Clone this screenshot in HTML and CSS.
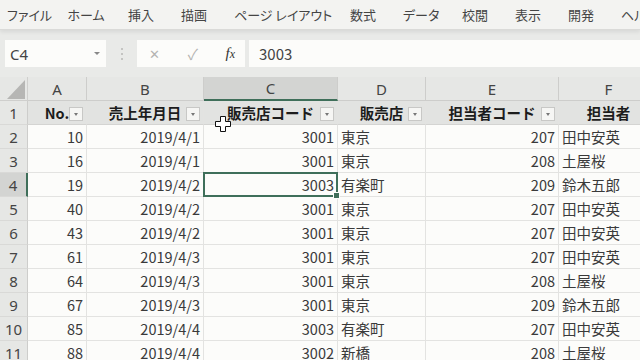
FILE: index.html
```html
<!DOCTYPE html>
<html lang="ja">
<head>
  <meta charset="UTF-8" /><meta name="viewport" content="width=device-width,initial-scale=1" />
  <title>売上データ - Excel</title>
  <link rel="stylesheet" href="styles.css">
</head>
<body>

  <!-- Ribbon tabs -->
  <div class="ribbon">
    <span class="tab wide">ファイル</span><span class="tab wide">ホーム</span><span class="tab">挿入</span><span class="tab">描画</span>
    <span class="tab long">ページ レイアウト</span><span class="tab">数式</span><span class="tab mid">データ</span><span class="tab">校閲</span>
    <span class="tab">表示</span><span class="tab">開発</span><span class="tab">ヘルプ</span>
  </div>

  <!-- Formula bar -->
  <div class="fbar">
    <div class="namebox"><span>C4</span><span class="nb-arrow"></span></div>
    <div class="dots"><i></i><i></i><i></i></div>
    <div class="fbtns">
      <span class="fb-x">✕</span>
      <span class="fb-ok">✓</span>
      <span class="fb-fx"><i>f</i><i class="sub">x</i></span>
    </div>
    <div class="formula">3003</div>
  </div>

  <!-- Sheet -->
  <div class="sheet">
    <div class="corner"><span class="tri"></span></div>
    <div class="colh">A</div><div class="colh">B</div><div class="colh cur">C</div>
    <div class="colh">D</div><div class="colh">E</div><div class="colh">F</div>

    <div class="rowh">1</div>
    <div class="th">No.<span class="flt"></span></div>
    <div class="th">売上年月日<span class="flt"></span></div>
    <div class="th">販売店コード<span class="flt"></span>
      <svg class="cursor" width="16" height="16" viewBox="0 0 16 16"><path d="M5.5 0.5h5v5h5v5h-5v5h-5v-5h-5v-5h5z" fill="#fff" stroke="#111" stroke-width="1"/></svg>
    </div>
    <div class="th">販売店<span class="flt"></span></div>
    <div class="th">担当者コード<span class="flt"></span></div>
    <div class="th">担当者<span class="flt"></span></div>

    <div class="rowh">2</div><div class="num">10</div><div class="num">2019/4/1</div><div class="num">3001</div><div class="txt">東京</div><div class="num">207</div><div class="txt">田中安英</div>
    <div class="rowh">3</div><div class="num">16</div><div class="num">2019/4/1</div><div class="num">3001</div><div class="txt">東京</div><div class="num">208</div><div class="txt">土屋桜</div>
    <div class="rowh cur">4</div><div class="num">19</div><div class="num">2019/4/2</div><div class="num sel">3003<span class="handle"></span></div><div class="txt">有楽町</div><div class="num">209</div><div class="txt">鈴木五郎</div>
    <div class="rowh">5</div><div class="num">40</div><div class="num">2019/4/2</div><div class="num">3001</div><div class="txt">東京</div><div class="num">207</div><div class="txt">田中安英</div>
    <div class="rowh">6</div><div class="num">43</div><div class="num">2019/4/2</div><div class="num">3001</div><div class="txt">東京</div><div class="num">207</div><div class="txt">田中安英</div>
    <div class="rowh">7</div><div class="num">61</div><div class="num">2019/4/3</div><div class="num">3001</div><div class="txt">東京</div><div class="num">207</div><div class="txt">田中安英</div>
    <div class="rowh">8</div><div class="num">64</div><div class="num">2019/4/3</div><div class="num">3001</div><div class="txt">東京</div><div class="num">208</div><div class="txt">土屋桜</div>
    <div class="rowh">9</div><div class="num">67</div><div class="num">2019/4/3</div><div class="num">3001</div><div class="txt">東京</div><div class="num">209</div><div class="txt">鈴木五郎</div>
    <div class="rowh">10</div><div class="num">85</div><div class="num">2019/4/4</div><div class="num">3003</div><div class="txt">有楽町</div><div class="num">207</div><div class="txt">田中安英</div>
    <div class="rowh">11</div><div class="num">88</div><div class="num">2019/4/4</div><div class="num">3002</div><div class="txt">新橋</div><div class="num">208</div><div class="txt">土屋桜</div>
  </div>

</body>
</html>
```

FILE: styles.css
```css
/* Reset & fonts */
*, *::before, *::after { margin:0; padding:0; box-sizing:border-box; }
body {
  width:640px; height:360px; overflow:hidden;
  font-family: "Noto Sans CJK JP", "Noto Sans", sans-serif;
  background:#e9eae8; color:#3a3a3a;
}

/* Ribbon tabs */
.ribbon {
  height:30px; display:flex; align-items:center;
  padding:0 0 1px 7px; background:#f3f3f1; white-space:nowrap; overflow:hidden;
  font-size:13px; color:#444; font-feature-settings:"palt";
  border-bottom:1px solid #dadad8; box-shadow:0 2px 4px rgba(0,0,0,0.08);
}
.tab { flex:none; width:53px; }
.tab.wide { width:60.5px; }
.tab.mid { width:59px; }
.tab.long { width:116px; }

/* Formula bar */
.fbar { display:flex; align-items:stretch; height:27px; margin:10px 0 10px 5px; }
.namebox {
  width:101px; background:#fcfcfa; display:flex; align-items:center; justify-content:space-between;
  padding:0 6px 0 5px; font:15px "Noto Sans", sans-serif; color:#444;
}
.nb-arrow { border:3px solid transparent; border-top:3px solid #888; border-bottom:0; width:0; height:0; }
.dots { width:31px; display:flex; flex-direction:column; align-items:center; justify-content:center; gap:3px; }
.dots i { width:2px; height:2px; background:#c4c4c2; }
.fbtns {
  width:108px; background:#fcfcfa; display:flex; align-items:center; justify-content:space-between;
  padding:0 10px 0 12px; color:#b4b4b2;
}
.fb-x { font-size:13px; }
.fb-ok { font-size:15px; }
.fb-fx { font:italic 15px "Liberation Serif", serif; color:#333; }
.fb-fx .sub { font-size:12px; }
.formula {
  flex:1; margin-left:4px; background:#fcfcfa; display:flex; align-items:center;
  padding-left:10px; font-size:15px; color:#444;
}

/* Sheet grid */
.sheet {
  display:grid; grid-template-columns:28px 59px 117px 134px 88px 133px 100px;
  grid-template-rows:24px; grid-auto-rows:24px;
  width:640px; overflow:hidden; background:#fcfcfa; font-size:14.5px;
}
.sheet > div { border-right:1px solid #e3e3e1; border-bottom:1px solid #e3e3e1; white-space:nowrap; }

.corner { background:#e6e7e5; position:relative; border-color:#cfcfcd !important; }
.tri {
  position:absolute; right:2px; bottom:1px; width:0; height:0;
  border-left:18px solid transparent; border-bottom:19px solid #b6b6b4;
}
.colh {
  background:#e6e7e5; display:flex; align-items:center; justify-content:center;
  font:15px "Noto Sans", sans-serif; color:#444; border-right-color:#cdcdcb !important;
  border-bottom-color:#cdcdcb !important;
}
.colh.cur { background:#d3d4d2; border-bottom:2px solid #3f6f5a !important; }
.rowh {
  background:#e6e7e5; display:flex; align-items:center; justify-content:center;
  font:15px "Noto Sans", sans-serif; color:#444; border-right-color:#cdcdcb !important;
  border-bottom-color:#d9d9d7 !important;
}
.rowh.cur { background:#d3d4d2; border-right:2px solid #3f6f5a !important; }

/* Table header row */
.th {
  background:#e2e3e1; position:relative; display:flex; align-items:center; justify-content:center;
  font-weight:bold; color:#1c1c1c; border-bottom-color:#d4d4d2 !important;
}
.flt {
  position:absolute; right:3px; bottom:3px; width:14px; height:14px;
  background:#f6f6f4; border:1px solid #c8c8c6;
}
.flt::after {
  content:""; position:absolute; left:4px; top:5px;
  border:2.5px solid transparent; border-top:3px solid #777; border-bottom:0;
}
.cursor { position:absolute; left:11px; top:15px; }

/* Data cells */
.num { display:flex; align-items:center; justify-content:flex-end; padding-right:3px; }
.txt { display:flex; align-items:center; padding-left:3px; }
.sel { position:relative; }
.sel::after {
  content:""; position:absolute; left:-1px; top:-1px; right:-1px; bottom:-1px;
  border:2px solid #3f6f5a;
}
.handle {
  position:absolute; right:-3px; bottom:-3px; width:5px; height:5px;
  background:#3f6f5a; border:1px solid #fcfcfa; z-index:1; box-sizing:content-box;
}
```
